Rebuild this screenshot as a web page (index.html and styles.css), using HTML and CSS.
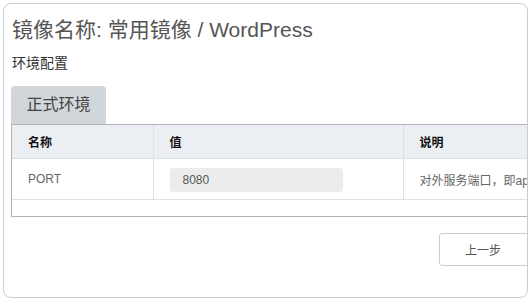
FILE: index.html
```html
<!DOCTYPE html>
<html lang="zh">
<head>
<meta charset="utf-8">
<link rel="stylesheet" href="styles.css">
</head>
<body>
<div class="card">
  <div class="inner">
    <h1 class="title">镜像名称: 常用镜像 / WordPress</h1>
    <div class="subtitle">环境配置</div>
    <div class="tabs"><div class="tab">正式环境</div></div>
    <div class="table-wrap">
      <table class="env">
        <colgroup><col class="w1"><col class="w2"><col class="w3"></colgroup>
        <thead>
          <tr><th class="c1">名称</th><th class="c2">值</th><th class="c3">说明</th></tr>
        </thead>
        <tbody>
          <tr>
            <td class="c1 name">PORT</td>
            <td class="c2"><div class="input">8080</div></td>
            <td class="c3 desc">对外服务端口，即apache监听端口</td>
          </tr>
        </tbody>
      </table>
    </div>
    <div class="footer"><button class="btn">上一步</button></div>
  </div>
</div>
</body>
</html>
```
FILE: styles.css
```css
html, body { margin: 0; padding: 0; background: #fff; }
body {
  padding: 3px;
  font-family: "Liberation Sans", "Noto Sans CJK SC", sans-serif;
  color: #333;
}
.card {
  width: 523px;
  height: 293px;
  border: 1px solid #c9cdd2;
  border-radius: 8px;
  overflow: hidden;
}
.inner {
  width: 600px;
  padding: 0 7px;
}
.title {
  margin: 14px 0 0 1px;
  font-size: 21px;
  font-weight: normal;
  line-height: 24px;
  color: #555;
}
.subtitle {
  margin: 11px 0 0 1px;
  font-size: 14px;
  line-height: 20px;
  color: #333;
}
.tabs { margin-top: 13px; display: flex; }
.tab {
  width: 95px;
  height: 38px;
  line-height: 38px;
  text-align: center;
  font-size: 16px;
  color: #444;
  background: #d1d6db;
  border-radius: 4px 4px 0 0;
}
.table-wrap {
  border: 1px solid #b4b4b4;
  padding-bottom: 16px;
}
.env {
  border-collapse: collapse;
  table-layout: fixed;
  width: 100%;
  font-size: 12px;
}
.w1 { width: 141px; }
.w2 { width: 250px; }
.env th {
  background: #ebeef2;
  height: 33px;
  text-align: left;
  font-weight: bold;
  color: #111;
  padding: 0 16px;
  border-bottom: 1px solid #dde0e4;
}
.env td {
  height: 40px;
  padding: 0 16px;
  border-bottom: 1px solid #dde0e4;
}
.env .c1, .env .c2 { border-right: 1px solid #dde0e4; }
.name { color: #666; }
.desc { color: #666; white-space: nowrap; overflow: hidden; }
.input {
  width: 160px;
  height: 24px;
  line-height: 24px;
  padding-left: 13px;
  margin-top: 2px;
  background: #ececec;
  border-radius: 4px;
  color: #555;
}
.footer {
  display: flex;
  margin-top: 16px;
  padding-left: 428px;
}
.btn {
  width: 100px;
  height: 33px;
  background: #fff;
  border: 1px solid #c9cdd2;
  border-radius: 3px;
  font-family: "Liberation Sans", "Noto Sans CJK SC", sans-serif;
  font-size: 12px;
  color: #555;
  text-align: left;
  padding: 0 0 0 25px;
}
```
